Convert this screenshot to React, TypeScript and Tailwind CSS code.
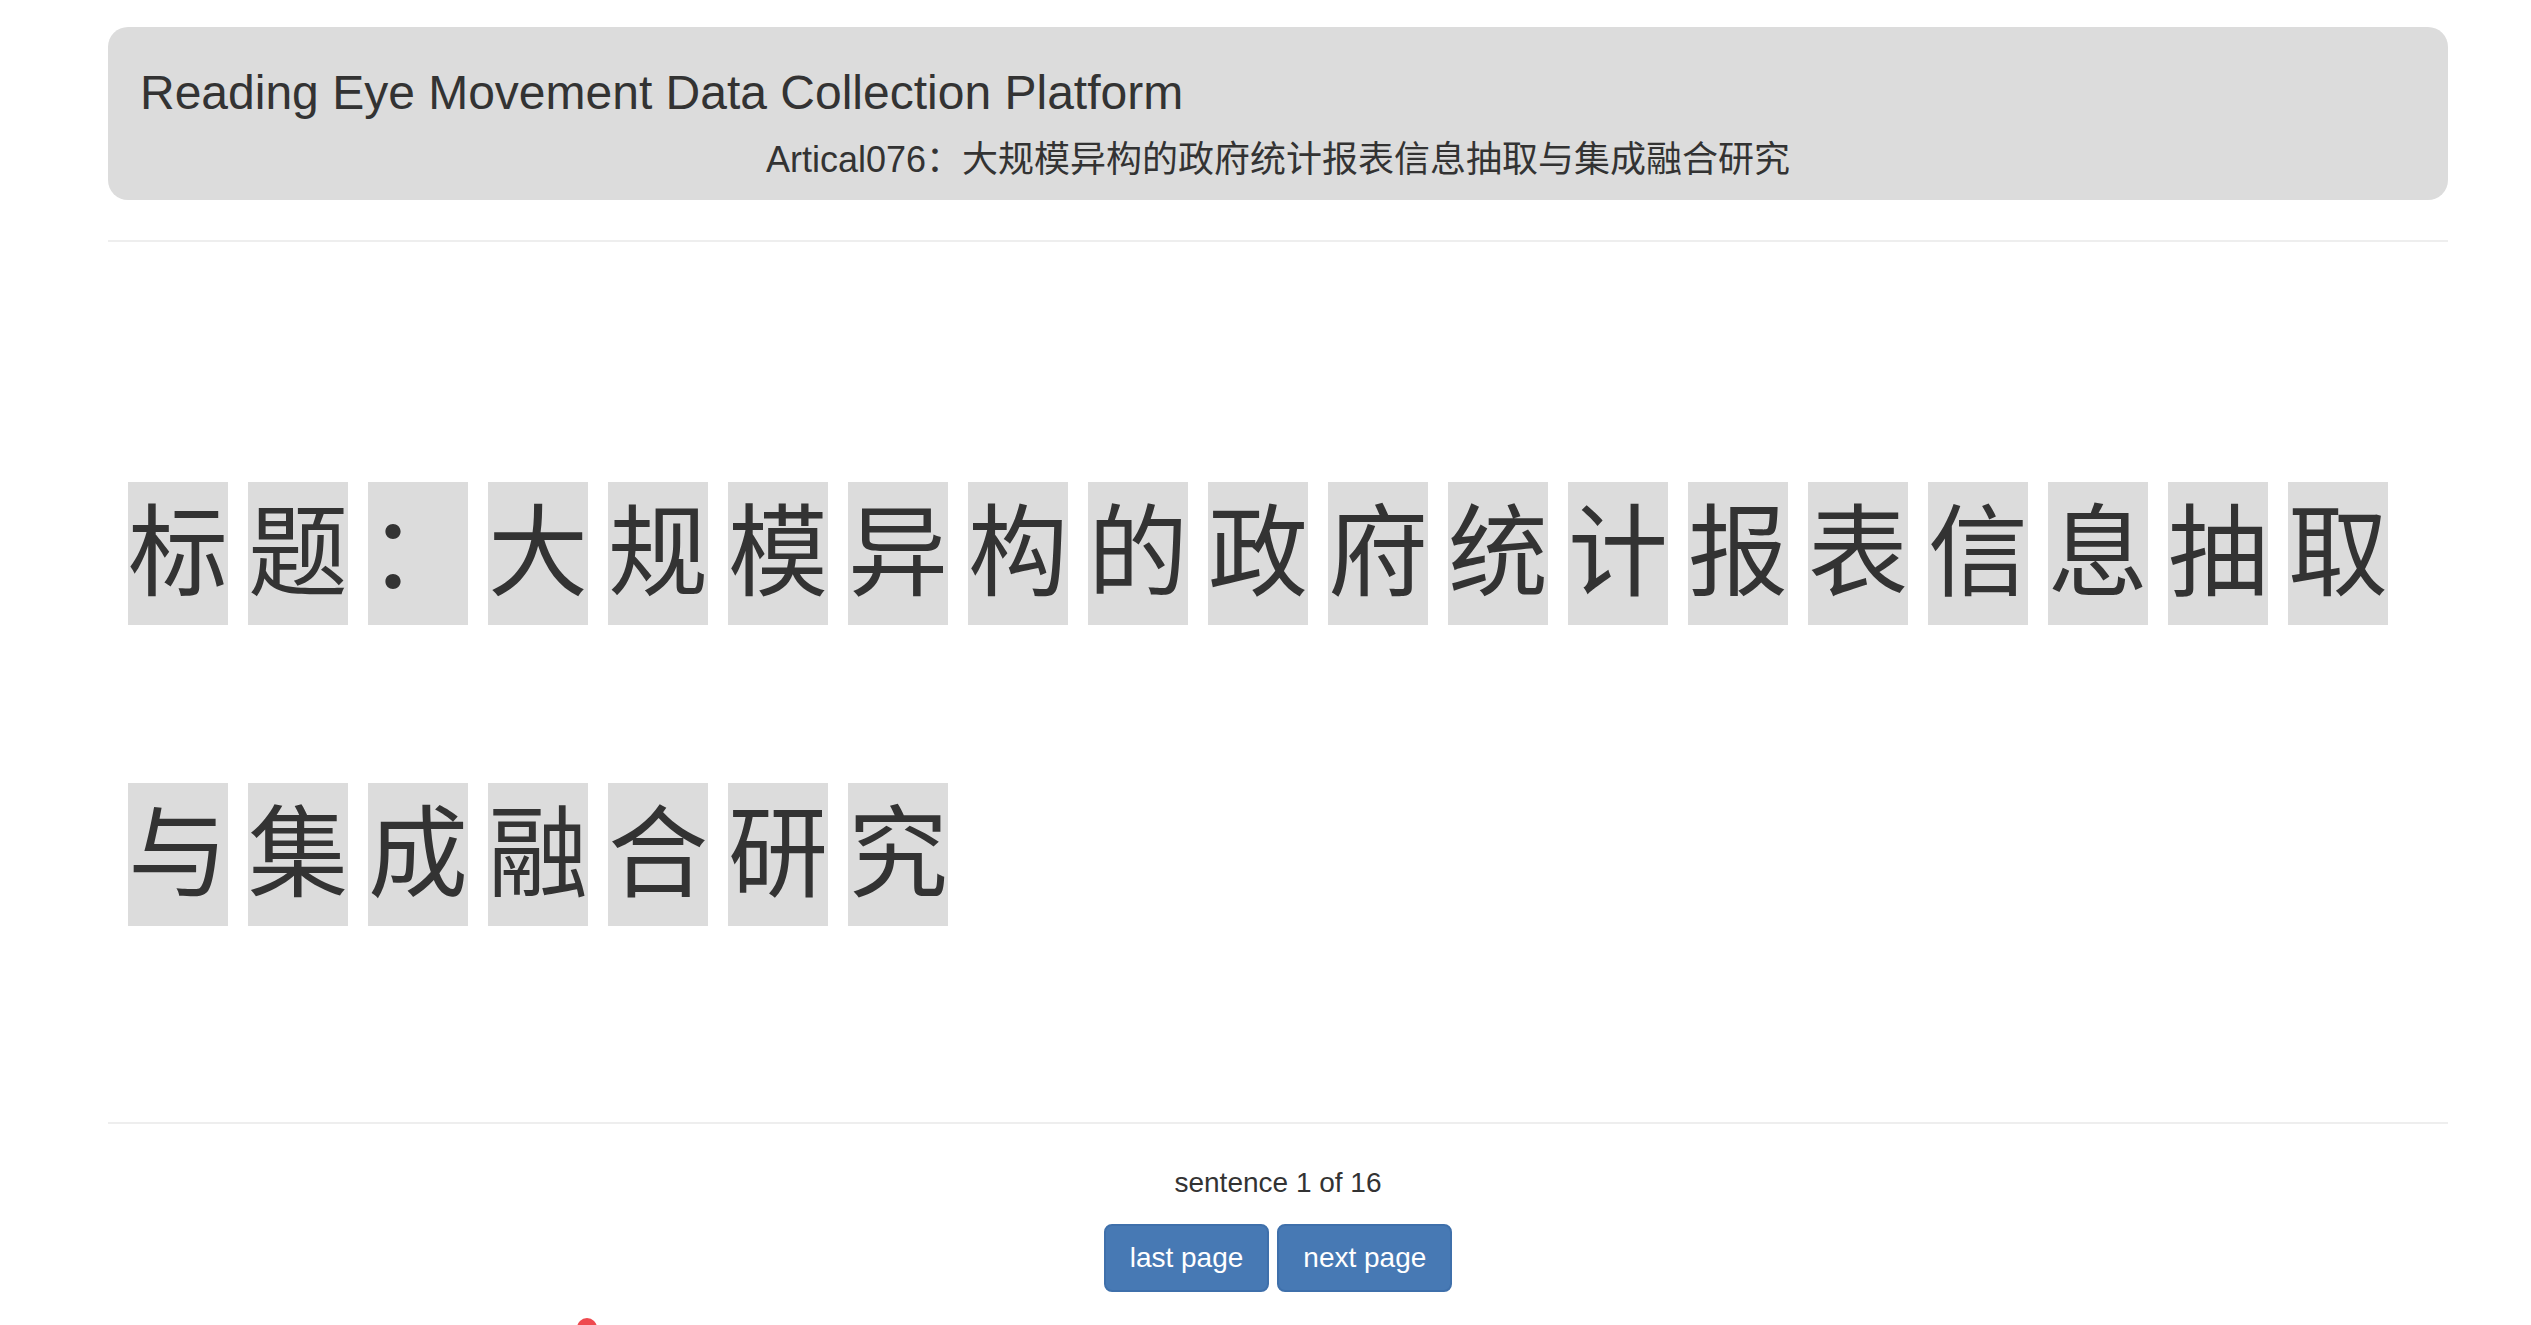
import React from "react";

const row1 = ["标", "题", "：", "大", "规", "模", "异", "构", "的", "政", "府", "统", "计", "报", "表", "信", "息", "抽", "取"];
const row2 = ["与", "集", "成", "融", "合", "研", "究"];

const FONT = { fontFamily: '"Liberation Sans", "Noto Sans CJK SC", sans-serif' };

function Char({ c }: { c: string }) {
  return (
    <span className="flex h-[143px] w-[100px] items-center justify-center bg-[#dcdcdc] text-[100px] leading-[143px] text-[#333]">
      {c}
    </span>
  );
}

export default function App() {
  return (
    <div className="relative h-[1325px] w-full overflow-hidden bg-white text-[#333]" style={FONT}>
      <div className="ml-[108px] w-[2340px] pt-[27px]">
        <div className="rounded-[20px] bg-[#dcdcdc] px-[32px] pb-[20px] pt-[40px]">
          <div className="text-[48px] leading-[52.8px]">Reading Eye Movement Data Collection Platform</div>
          <div className="mt-[20px] text-center text-[36px] leading-[40px]">
            Artical076：大规模异构的政府统计报表信息抽取与集成融合研究
          </div>
        </div>
        <div className="mt-[40px] h-[2px] bg-[#eeeeee]" />
        <div className="h-[880px] pl-[20px] pt-[240px]">
          <div className="flex flex-col gap-y-[158px]">
            <div className="flex gap-x-[20px]">
              {row1.map((c, i) => (
                <Char key={i} c={c} />
              ))}
            </div>
            <div className="flex gap-x-[20px]">
              {row2.map((c, i) => (
                <Char key={i} c={c} />
              ))}
            </div>
          </div>
        </div>
        <div className="h-[2px] bg-[#eeeeee]" />
        <div className="mt-[39px] text-center text-[28px] leading-[40px]">sentence 1 of 16</div>
        <div className="mt-[21px] flex justify-center gap-[8px]">
          <button className="h-[68px] rounded-[8px] border-2 border-[#3f70ab] bg-[#4779b4] px-[24px] text-[28px] leading-[40px] text-white">
            last page
          </button>
          <button className="h-[68px] rounded-[8px] border-2 border-[#3f70ab] bg-[#4779b4] px-[24px] text-[28px] leading-[40px] text-white">
            next page
          </button>
        </div>
      </div>
      <div className="absolute left-[577px] top-[1318px] h-[20px] w-[20px] rounded-full bg-[#ef4a4f]" />
    </div>
  );
}
